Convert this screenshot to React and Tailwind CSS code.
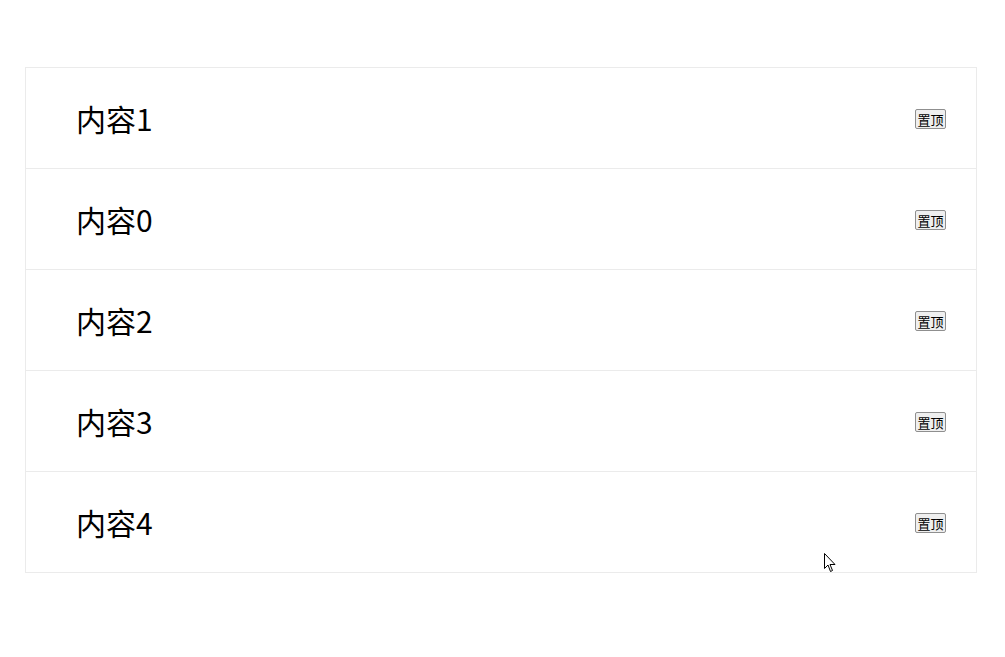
import React, { useState } from 'react';

const initial = ['内容1', '内容0', '内容2', '内容3', '内容4'];

export default function App() {
    const [items, setItems] = useState(initial);

    const pinToTop = (i) => {
        const next = [...items];
        const [it] = next.splice(i, 1);
        setItems([it, ...next]);
    };

    return (
        <div className="relative min-h-screen bg-white pt-[67px] px-[25px]" style={{ fontFamily: '"Noto Sans CJK SC", "Liberation Sans", sans-serif' }}>
            <div className="w-[952px] border-x border-t border-[#ebebeb]">
                {items.map((item, i) => (
                    <div key={item} className="h-[101px] flex items-center justify-between pl-[50px] pr-[30px] border-b border-[#ebebeb]">
                        <span className="text-[30px] leading-none text-black">{item}</span>
                        <button
                            onClick={() => pinToTop(i)}
                            className="h-[20px] w-[31px] mt-[2px] px-0 text-[13px] leading-none text-black bg-[#efefef] border border-[#8f8f8f] rounded-[2px]"
                        >
                            置顶
                        </button>
                    </div>
                ))}
            </div>
            {/* mouse cursor */}
            <svg className="absolute left-[824px] top-[553px]" width="13" height="20" viewBox="0 0 13 20">
                <path d="M0.5 0.5 L0.5 15.5 L4 12 L6.5 18.5 L8.5 17.5 L6 11.5 L11 11.5 Z" fill="white" stroke="black" strokeWidth="1" strokeLinejoin="miter" />
            </svg>
        </div>
    );
}
